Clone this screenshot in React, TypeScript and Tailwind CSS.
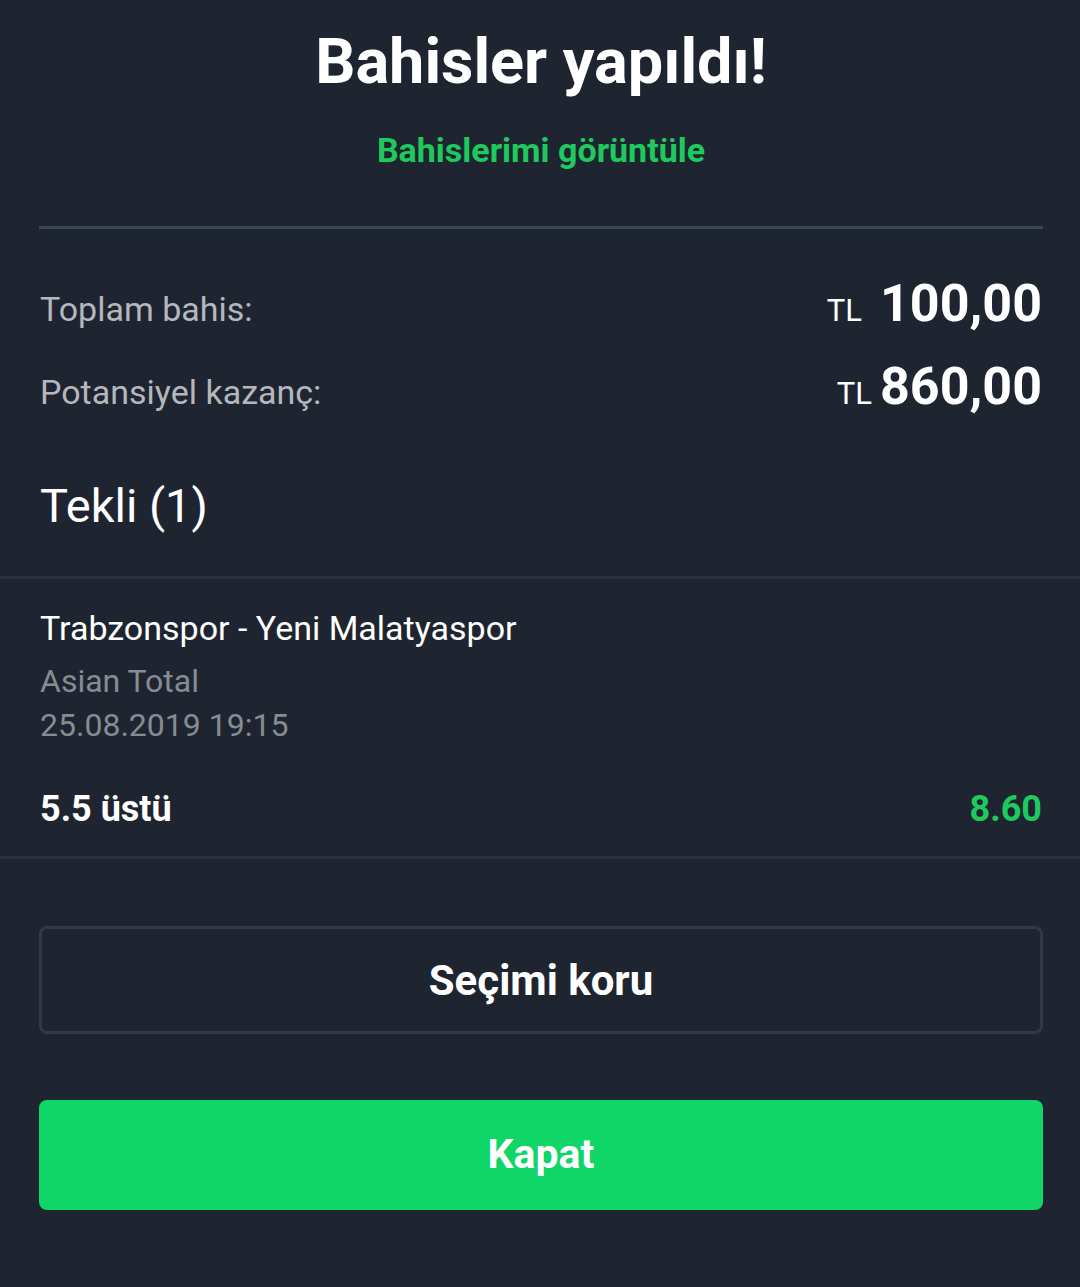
export default function App() {
  return (
    <div className="min-h-[1287px] w-[1080px] bg-[#1f2530] font-['Roboto',sans-serif] text-white">
      {/* Header */}
      <div className="pl-[39px] pr-[37px] pt-[22px]">
        <h1 className="text-center text-[63px] font-bold leading-[80px]">Bahisler yapıldı!</h1>
        <div className="mt-[28px] text-center text-[34px] font-bold leading-[40px] text-[#1ec95e]">Bahislerimi görüntüle</div>
        <div className="mt-[56px] h-[3px] bg-[#37474f]" />
      </div>

      {/* Totals */}
      <div className="pl-[40px] pr-[38px] pt-[36px]">
        <div className="flex items-baseline justify-between">
          <span className="text-[34px] text-[#b4b8be]">Toplam bahis:</span>
          <span className="flex items-baseline gap-[18px]">
            <span className="text-[31px]">TL</span>
            <span className="text-[52px] font-bold">100,00</span>
          </span>
        </div>
        <div className="mt-[5px] flex items-baseline justify-between">
          <span className="text-[34px] text-[#b4b8be]">Potansiyel kazanç:</span>
          <span className="flex items-baseline gap-[8px]">
            <span className="text-[31px]">TL</span>
            <span className="text-[52px] font-bold">860,00</span>
          </span>
        </div>
        <div className="pt-[50px] pb-[40px] text-[47px] leading-[60px]">Tekli (1)</div>
      </div>

      {/* Selection */}
      <div className="border-y-[3px] border-[#2c323d] pl-[40px] pr-[38px] pt-[26px] pb-[25px]">
        <div className="text-[34px] leading-[46px]">Trabzonspor - Yeni Malatyaspor</div>
        <div className="mt-[8px] text-[32px] leading-[44px] text-[#878c93]">Asian Total</div>
        <div className="text-[32px] leading-[44px] text-[#878c93]">25.08.2019 19:15</div>
        <div className="mt-[40px] flex items-baseline justify-between text-[36px] font-bold leading-[44px]">
          <span>5.5 üstü</span>
          <span className="text-[#1ec95e]">8.60</span>
        </div>
      </div>

      {/* Actions */}
      <div className="flex flex-col gap-[66px] pl-[39px] pr-[37px] pt-[67px]">
        <button className="h-[108px] rounded-[8px] border-[3px] border-[#333942] text-[42px] font-bold">Seçimi koru</button>
        <button className="h-[110px] rounded-[8px] bg-[#0fd667] text-[41px] font-bold">Kapat</button>
      </div>
    </div>
  )
}
